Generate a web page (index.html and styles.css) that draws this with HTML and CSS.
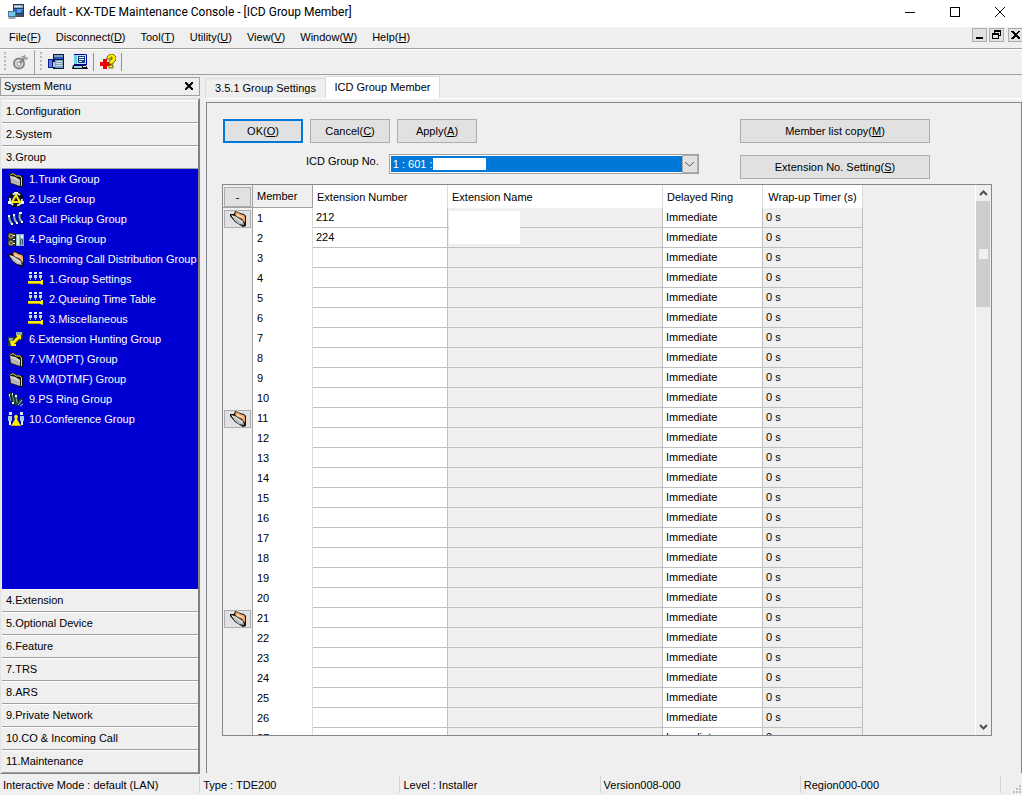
FILE: index.html
```html
<!doctype html>
<html lang="en">
    <head>
        <meta charset="UTF-8" />
        <meta name="viewport" content="width=device-width, initial-scale=1.0" />
        <title>default - KX-TDE Maintenance Console - [ICD Group Member]</title>
        <link rel="stylesheet" href="styles.css">
    </head>
    <body>
        <!-- shared icons -->
        <svg class="icon-defs" aria-hidden="true">
            <symbol id="i-console" viewBox="0 0 16 16">
                <path d="M5 0h11v13H5z" fill="#1c3a5e" />
                <path d="M6 1h9v3H6z" fill="#8fa6bc" />
                <path d="M6 2h7v1H6z" fill="#dfe9f2" />
                <path d="M6 5h9v4H6z" fill="#2a62c8" />
                <path d="M9 5h6l-3 4H9z" fill="#4f9be8" />
                <path d="M7 10h8v3H7z" fill="#3f5468" />
                <path d="M0 7h8v6H0z" fill="#4a7890" />
                <path d="M1 8h6v4H1z" fill="#6cc8ee" />
                <path d="M1 13h7l-1 2H0z" fill="#9aa6b0" />
            </symbol>
            <symbol id="i-connect" viewBox="0 0 16 16">
                <path d="M5 0h11v15H5z" fill="#001a4a" />
                <path d="M6 1h9v2H6z" fill="#8a9cb0" />
                <path d="M6 3h9v2H6z" fill="#1c5cc0" />
                <path d="M7 6h8v8H7z" fill="#7ba0b8" />
                <path d="M8 7.500h6M8 9.500h6M8 11.500h6" stroke="#cfe0ea" />
                <path d="M0 5h5v9H0z" fill="#0a1b8c" />
                <path d="M1 6h3v7H1z" fill="#5b7fd8" />
                <path d="M5 8h2v5H5z" fill="#c0c8d0" />
            </symbol>
            <symbol id="i-pc" viewBox="0 0 16 16">
                <path d="M2 0h12l1 1v10H2z" fill="#0000b0" />
                <path d="M2 1h3v9H2z" fill="#6cd0e8" />
                <path d="M5 1h9v9H5z" fill="#c4eef4" />
                <path d="M6 2h7v7H6z" fill="#123c8c" />
                <path d="M7 3.500h5M7 5.500h5M7 7.500h3" stroke="#fff" />
                <path d="M1 11h13l2 4H0z" fill="#0a1020" />
                <path d="M2 12h8v2H2z" fill="#8ad8e8" />
                <path d="M11 12h3v1h-3z" fill="#fff" />
            </symbol>
            <symbol id="i-plug" viewBox="0 0 16 16">
                <circle cx="7" cy="9.500" r="5" fill="#dcdcdc" stroke="#858585" stroke-width="2" />
                <circle cx="7" cy="10" r="2" fill="#f4f4f4" stroke="#999" />
                <path d="M8 9l5-6" stroke="#808080" stroke-width="2" />
                <path d="M9 2l2 1 2-2v3h3l-3 2" fill="#aaa" stroke="#999" />
            </symbol>
            <symbol id="i-help" viewBox="0 0 16 16">
                <path d="M3 5h4v3h4v4H7v3H3v-3H0V8h3z" fill="#f00000" />
                <path d="M7 5V3l3-3h3l3 3v3l-3 3v1H9V7l3-2V3h-1v2z" fill="#ffee00" stroke="#4a4400" stroke-width=".8" />
                <path d="M9 11h4v3H9z" fill="#ffee00" stroke="#4a4400" stroke-width=".8" />
            </symbol>
            <symbol id="i-folder" viewBox="0 0 16 16">
                <path d="M1 4l2-2h3l2 2h4l3 2v10h-3L1 12z" fill="#111" />
                <path d="M2 5l5 1 5 3v6L3 12z" fill="#b4b4b4" />
                <path d="M2 5l5 1 5 3v2L3 7z" fill="#d2d2ce" />
                <path d="M2 4.500L3.500 3H6l2 2h4l1.500 2v8" fill="none" stroke="#e6dc50" />
            </symbol>
            <symbol id="i-open" viewBox="0 0 16 16">
                <path d="M4 3l1-3 3 1 2 1 4 1 2 2v10l-3 1-8-5-5-6V3z" fill="#111" />
                <path d="M5 3l1-2 3 1 1 1 4 1 1 2v6l-3-4-6-3z" fill="#f6a868" />
                <path d="M7 3l6 3v1L7 5z" fill="#ffd9b0" />
                <path d="M1 4l4 1 5 3 3 2 1 4-5-1-4-3z" fill="#c0c0c0" />
                <path d="M2 5l6 3 4 3" fill="none" stroke="#ececec" />
            </symbol>
            <symbol id="i-user" viewBox="0 0 16 16">
                <circle cx="8" cy="8.500" r="6" fill="none" stroke="#000820" stroke-width="4" />
                <circle cx="8" cy="8.500" r="6" fill="none" stroke="#c4dce0" stroke-width="2" stroke-dasharray="8 4" />
                <path d="M8 4l4 7H4z" fill="#223" stroke="#ffe600" stroke-width="2" />
                <path d="M0 10h3v3H0zM13 10h3v3h-3zM6 1h4v1H6z" fill="#e8f4f4" />
            </symbol>
            <symbol id="i-pickup" viewBox="0 0 16 16">
                <path d="M1 5q0 6 4 9M6 4q0 6 4 9M13 2q-3 6 1 10" fill="none" stroke="#001030" stroke-width="3" />
                <path d="M1 5q0 5 3 8M6 4q0 5 3 8M12 2q-2 5 2 9" fill="none" stroke="#84acb8" stroke-width="2" />
                <path d="M0 4h2v2H0zM5 3h2v2H5zM11 1h3v2h-3zM3 12h2v2H3zM8 11h2v2H8zM13 10h2v2h-2z" fill="#fff" />
            </symbol>
            <symbol id="i-paging" viewBox="0 0 16 16">
                <path d="M0 2h7v13H0z" fill="#29303a" />
                <circle cx="3" cy="5" r="2" fill="#554" stroke="#c8b850" />
                <circle cx="3" cy="12" r="2" fill="#554" stroke="#c8b850" />
                <path d="M5 4.500h2M5 8.500h2M5 12.500h2" stroke="#fff" />
                <path d="M8 3h8v12H8z" fill="#8fb4bc" />
                <path d="M9 4h2v10H9zM13 4h2v3h-2z" fill="#e0f0f0" />
                <path d="M12 8h1v6h-1zM14 8h1v6h-1z" fill="#385868" />
            </symbol>
            <symbol id="i-settings" viewBox="0 0 16 16">
                <path d="M1 1h3v2H1zM6 1h3v2H6zM11 1h3v2h-3z" fill="#dcf0f4" />
                <path d="M1 4h3v3H1zM6 4h3v3H6zM11 4h3v3h-3z" fill="#c4dce4" />
                <path d="M2 7h1v2H2zM7 7h1v2H7zM12 7h1v2h-1z" fill="#8fb4c4" />
                <path d="M0 10h13V9h2v4H0z" fill="#ffee00" />
                <path d="M0 12h12v1H0zM13 13h2v1h-2z" fill="#b0a400" />
            </symbol>
            <symbol id="i-hunting" viewBox="0 0 16 16">
                <path d="M8 1h7v7H8zM0 6h7v9H0z" fill="#24384a" />
                <path d="M8 1h6v3H8zM1 7h4v3H1z" fill="#88a8b4" />
                <path d="M4 13l7-7" stroke="#3a3600" stroke-width="5" />
                <path d="M4 13l7-7" stroke="#ffee00" stroke-width="3" />
                <path d="M8 4h5v5zM2 10h3v3h3v2H3z" fill="#ffee00" />
            </symbol>
            <symbol id="i-psring" viewBox="0 0 16 16">
                <path d="M0 2l4-1 5 12-4 2z" fill="#102c24" />
                <path d="M6 4l3-1 2 11-4 1zM10 9l5-2-1 5-5 3z" fill="#1c3c30" />
                <path d="M1 4l2 6M4 3l2 8M8 6l1 6" stroke="#6fa48c" />
                <path d="M1 3h1v2H1zM4 2h1v2H4zM7 4h2v2H7zM4 11h2v2H4z" fill="#eef6f0" />
                <path d="M10 14l4-5M12 15l3-2" stroke="#b4ccc0" />
            </symbol>
            <symbol id="i-conference" viewBox="0 0 16 16">
                <path d="M1 1h3v3H1zM12 1h3v3h-3z" fill="#d0eef8" />
                <path d="M0 5h4v5H0zM12 5h4v5h-4z" fill="#a4ccdc" />
                <path d="M1 10h2v4H1zM13 10h2v4h-2z" fill="#f0fafc" />
                <path d="M7 4h2l1 2-1 2 4 7H3l4-7-1-2z" fill="#ffee00" />
                <path d="M3 14h10v1H3z" fill="#c8b800" />
            </symbol>
        </svg>

        <header class="title-bar">
            <svg class="icon"><use href="#i-console" /></svg>
            <h1>default - KX-TDE Maintenance Console - [ICD Group Member]</h1>
            <div class="window-buttons">
                <button aria-label="Minimize"><svg viewBox="0 0 10 10"><path d="M0 5.500h10" /></svg></button>
                <button aria-label="Maximize"><svg viewBox="0 0 10 10"><path d="M.5.5h9v9h-9z" /></svg></button>
                <button aria-label="Close"><svg viewBox="0 0 10 10" class="smooth"><path d="M0 0l10 10M10 0L0 10" /></svg></button>
            </div>
        </header>

        <nav class="menu-bar">
            <button>File(<u>F</u>)</button>
            <button>Disconnect(<u>D</u>)</button>
            <button>Tool(<u>T</u>)</button>
            <button>Utility(<u>U</u>)</button>
            <button>View(<u>V</u>)</button>
            <button>Window(<u>W</u>)</button>
            <button>Help(<u>H</u>)</button>
            <div class="child-buttons">
                <button aria-label="Minimize child"><svg viewBox="0 0 13 12"><path d="M3 8h7v2H3z" /></svg></button>
                <button aria-label="Restore child"><svg viewBox="0 0 13 12"><path d="M4 1h7v6H9V6h1V3H5v1H4zM2 4h7v6H2zM3 6v3h5V6z" fill-rule="evenodd" /></svg></button>
                <button aria-label="Close child"><svg viewBox="0 0 13 12"><path d="M2 2h2l2 2h1l2-2h2v1L8 5v1l3 3v1H9L7 8H6l-2 2H2V9l3-3V5L2 3z" /></svg></button>
            </div>
        </nav>

        <div class="toolbar">
            <span class="grip"></span>
            <button aria-label="Disconnect"><svg class="icon"><use href="#i-plug" /></svg></button>
            <span class="tool-end"></span>
            <span class="grip"></span>
            <button aria-label="Connect"><svg class="icon"><use href="#i-connect" /></svg></button>
            <button aria-label="PC settings"><svg class="icon"><use href="#i-pc" /></svg></button>
            <span class="tool-line"></span>
            <button aria-label="Help"><svg class="icon"><use href="#i-help" /></svg></button>
            <span class="tool-line"></span>
        </div>

        <div class="workspace">
            <aside class="sidebar">
                <div class="sidebar-head">
                    <h2>System Menu</h2>
                    <button aria-label="Close System Menu"><svg viewBox="0 0 8 8"><path d="M0 0l8 8M8 0L0 8" /></svg></button>
                </div>
                <div class="sections">
                    <button class="section">1.Configuration</button>
                    <button class="section">2.System</button>
                    <button class="section">3.Group</button>
                    <ul class="tree">
                        <li><a href="#"><svg class="icon"><use href="#i-folder" /></svg>1.Trunk Group</a></li>
                        <li><a href="#"><svg class="icon"><use href="#i-user" /></svg>2.User Group</a></li>
                        <li><a href="#"><svg class="icon"><use href="#i-pickup" /></svg>3.Call Pickup Group</a></li>
                        <li><a href="#"><svg class="icon"><use href="#i-paging" /></svg>4.Paging Group</a></li>
                        <li>
                            <a href="#"><svg class="icon"><use href="#i-open" /></svg>5.Incoming Call Distribution Group</a>
                            <ul>
                                <li><a href="#"><svg class="icon"><use href="#i-settings" /></svg>1.Group Settings</a></li>
                                <li><a href="#"><svg class="icon"><use href="#i-settings" /></svg>2.Queuing Time Table</a></li>
                                <li><a href="#"><svg class="icon"><use href="#i-settings" /></svg>3.Miscellaneous</a></li>
                            </ul>
                        </li>
                        <li><a href="#"><svg class="icon"><use href="#i-hunting" /></svg>6.Extension Hunting Group</a></li>
                        <li><a href="#"><svg class="icon"><use href="#i-folder" /></svg>7.VM(DPT) Group</a></li>
                        <li><a href="#"><svg class="icon"><use href="#i-folder" /></svg>8.VM(DTMF) Group</a></li>
                        <li><a href="#"><svg class="icon"><use href="#i-psring" /></svg>9.PS Ring Group</a></li>
                        <li><a href="#"><svg class="icon"><use href="#i-conference" /></svg>10.Conference Group</a></li>
                    </ul>
                    <button class="section">4.Extension</button>
                    <button class="section">5.Optional Device</button>
                    <button class="section">6.Feature</button>
                    <button class="section">7.TRS</button>
                    <button class="section">8.ARS</button>
                    <button class="section">9.Private Network</button>
                    <button class="section">10.CO &amp; Incoming Call</button>
                    <button class="section">11.Maintenance</button>
                </div>
            </aside>

            <main class="content">
                <div class="tabs" role="tablist">
                    <button class="tab" role="tab" aria-selected="false">3.5.1 Group Settings</button>
                    <button class="tab active" role="tab" aria-selected="true">ICD Group Member</button>
                </div>
                <section class="panel">
                    <div class="form-top">
                        <div class="form-left">
                            <div class="actions">
                                <button class="btn default">OK(<u>O</u>)</button>
                                <button class="btn">Cancel(<u>C</u>)</button>
                                <button class="btn">Apply(<u>A</u>)</button>
                            </div>
                            <div class="group-row">
                                <label for="group">ICD Group No.</label>
                                <div class="combo">
                                    <select id="group">
                                        <option>1 : 601 :</option>
                                    </select>
                                    <span class="combo-mask"></span>
                                    <span class="combo-arrow"><svg viewBox="0 0 9 5"><path d="M0 0l4.500 4L9 0" /></svg></span>
                                </div>
                            </div>
                        </div>
                        <div class="form-right">
                            <button class="btn">Member list copy(<u>M</u>)</button>
                            <button class="btn">Extension No. Setting(<u>S</u>)</button>
                        </div>
                    </div>

                    <div class="grid">
                        <div class="grid-view">
                            <table>
                                <colgroup>
                                    <col class="c-select" />
                                    <col class="c-member" />
                                    <col class="c-number" />
                                    <col class="c-name" />
                                    <col class="c-ring" />
                                    <col class="c-timer" />
                                </colgroup>
                                <thead>
                                    <tr>
                                        <th class="select"><button>-</button></th>
                                        <th class="member">Member</th>
                                        <th>Extension Number</th>
                                        <th>Extension Name</th>
                                        <th>Delayed Ring</th>
                                        <th class="timer">Wrap-up Timer (s)</th>
                                    </tr>
                                </thead>
                                <tbody id="members"></tbody>
                            </table>
                        </div>
                        <div class="scrollbar">
                            <button aria-label="Scroll up"><svg viewBox="0 0 9 6"><path d="M1 5l3.500-3.500L8 5" /></svg></button>
                            <div class="track"><div class="thumb"></div></div>
                            <button aria-label="Scroll down"><svg viewBox="0 0 9 6"><path d="M1 1l3.500 3.500L8 1" /></svg></button>
                        </div>
                    </div>
                </section>
            </main>
        </div>

        <footer class="status-bar">
            <span>Interactive Mode : default (LAN)</span>
            <span>Type : TDE200</span>
            <span>Level : Installer</span>
            <span>Version008-000</span>
            <span>Region000-000</span>
            <svg class="size-grip" viewBox="0 0 9 9"><path d="M6 0h2v2H6zM3 3h2v2H3zM6 3h2v2H6zM0 6h2v2H0zM3 6h2v2H3zM6 6h2v2H6z" /></svg>
        </footer>

        <script src="script.js"></script>
    </body>
</html>
```

FILE: styles.css
```css
* {
    box-sizing: border-box;
}
body {
    margin: 0;
    height: 100vh;
    display: flex;
    flex-direction: column;
    overflow: hidden;
    background: #efefef;
    color: #000;
    font: 11px/14px "Liberation Sans", Arial, sans-serif;
}
button,
select {
    font: inherit;
    color: inherit;
    margin: 0;
    padding: 0;
    border: 0;
    border-radius: 0;
    background: none;
}
h1,
h2 {
    margin: 0;
    font-size: inherit;
    font-weight: normal;
}
ul {
    margin: 0;
    padding: 0;
    list-style: none;
}
a {
    color: inherit;
    text-decoration: none;
}
svg {
    display: block;
    flex: none;
    shape-rendering: crispEdges;
}
.icon-defs {
    position: absolute;
    width: 0;
    height: 0;
}
.icon {
    width: 16px;
    height: 16px;
    shape-rendering: auto;
}

/* title bar */
.title-bar {
    display: flex;
    align-items: center;
    height: 27px;
    padding: 0 0 4px 8px;
    gap: 5px;
    background: #fff;
}
.title-bar h1 {
    font: 12px/16px Roboto, "Open Sans", sans-serif;
}
.window-buttons {
    display: flex;
    margin-left: auto;
}
.window-buttons button {
    display: grid;
    place-items: center;
    width: 45px;
    height: 22px;
}
.window-buttons svg {
    width: 10px;
    height: 10px;
    fill: none;
    stroke: #000;
}
.window-buttons .smooth {
    shape-rendering: auto;
}

/* menu bar */
.menu-bar {
    display: flex;
    gap: 15px;
    height: 22px;
    padding-left: 9px;
    border-bottom: 1px solid #a0a0a0;
}
.menu-bar > button {
    padding-bottom: 2px;
}
.child-buttons {
    display: flex;
    gap: 2px;
    margin: 1px -1px 0 auto;
}
.child-buttons button {
    width: 15px;
    height: 14px;
    border: 1px solid #adadad;
    background: #e1e1e1;
}
.child-buttons button:last-child {
    margin-left: 2px;
}
.child-buttons svg {
    width: 13px;
    height: 12px;
}

/* toolbar */
.toolbar {
    display: flex;
    align-items: center;
    height: 26px;
    padding-left: 4px;
    border-top: 1px solid #fff;
    border-bottom: 1px solid #a0a0a0;
}
.toolbar button {
    padding: 0 4px;
}
.grip {
    width: 2px;
    height: 20px;
    margin-right: 2px;
    background: repeating-linear-gradient(#b8b8b8 0 2px, transparent 2px 4px);
}
.tool-end {
    align-self: stretch;
    width: 1px;
    margin: 0 5px 0 2px;
    background: #a0a0a0;
}
.tool-line {
    width: 1px;
    height: 18px;
    margin: 0 2px 0 1px;
    background: #909090;
}

/* system menu */
.workspace {
    flex: 1;
    display: flex;
    min-height: 0;
}
.sidebar {
    flex: none;
    display: flex;
    flex-direction: column;
    width: 200px;
    padding-top: 2px;
}
.sidebar-head {
    display: flex;
    align-items: center;
    justify-content: space-between;
    height: 19px;
    padding: 0 6px 1px 3px;
    border: 1px solid #a0a0a0;
}
.sidebar-head svg {
    width: 8px;
    height: 8px;
    stroke: #000;
    stroke-width: 2;
    shape-rendering: auto;
}
.sections {
    flex: 1;
    display: flex;
    flex-direction: column;
    margin-top: 2px;
    border: 1px solid #808080;
    border-top: 2px solid #e3e3e3;
    border-left-color: #e3e3e3;
    border-right-width: 2px;
    padding-left: 1px;
}
.section {
    flex: none;
    height: 23px;
    padding: 0 4px 2px;
    text-align: left;
    border-top: 1px solid #fff;
    border-bottom: 1px solid #a0a0a0;
}
.tree {
    flex: 1;
    background: #0000d2;
    color: #fff;
}
.tree a {
    display: flex;
    align-items: center;
    gap: 5px;
    height: 20px;
    padding-left: 6px;
    white-space: nowrap;
}
.tree ul {
    padding-left: 20px;
}

/* tabs and panel */
.content {
    flex: 1;
    display: flex;
    flex-direction: column;
    min-width: 0;
    padding: 1px 0 1px 5px;
}
.tabs {
    display: flex;
    align-items: flex-end;
    border-bottom: 1px solid #fff;
}
.tab {
    width: 120px;
    height: 20px;
    padding-bottom: 2px;
    border: 1px solid #dcdcdc;
    border-right: 0;
    border-bottom: 0;
    white-space: nowrap;
}
.tab.active {
    width: 115px;
    height: 22px;
    border-right: 1px solid #dcdcdc;
    background: #fff;
}
.panel {
    flex: 1;
    display: flex;
    flex-direction: column;
    gap: 5px;
    min-height: 0;
    margin: 3px 0 0 1px;
    padding: 16px 29px 37px 15px;
    border: 1px solid #828790;
    border-bottom: 0;
}
.form-top {
    display: flex;
    justify-content: space-between;
    padding: 0 62px 0 1px;
}
.form-left {
    display: flex;
    flex-direction: column;
    gap: 11px;
}
.actions {
    display: flex;
    gap: 7px;
}
.btn {
    width: 80px;
    height: 24px;
    border: 1px solid #adadad;
    background: #e1e1e1;
}
.btn.default {
    border: 2px solid #0078d7;
}
.form-right {
    display: flex;
    flex-direction: column;
    gap: 12px;
}
.form-right .btn {
    width: 190px;
}
.group-row {
    display: flex;
    gap: 10px;
    padding-left: 83px;
}
.combo {
    position: relative;
    width: 310px;
    height: 20px;
    padding: 1px;
    border: 1px solid #a0a0a0;
    background: #fff;
}
.combo select {
    appearance: none;
    display: block;
    width: 100%;
    height: 16px;
    padding-left: 2px;
    line-height: 16px;
    background: #0078d7;
    color: #fff;
}
.combo-mask {
    position: absolute;
    left: 43px;
    top: 3px;
    width: 53px;
    height: 12px;
    background: #fff;
}
.combo-arrow {
    position: absolute;
    right: 0;
    top: 0;
    display: grid;
    place-items: center;
    width: 16px;
    height: 18px;
    border: 1px solid #adadad;
    background: #e1e1e1;
    pointer-events: none;
}
.combo-arrow svg {
    width: 9px;
    height: 5px;
    fill: none;
    stroke: #555;
    shape-rendering: auto;
}

/* member grid */
.grid {
    flex: 1;
    display: flex;
    min-height: 0;
    border: 1px solid #828790;
}
.grid-view {
    flex: 1;
    overflow: hidden;
}
table {
    width: 640px;
    table-layout: fixed;
    border-collapse: separate;
    border-spacing: 0;
}
.c-select {
    width: 30px;
}
.c-member {
    width: 60px;
}
.c-number {
    width: 135px;
}
.c-name {
    width: 215px;
}
.c-ring,
.c-timer {
    width: 100px;
}
th {
    height: 23px;
    padding: 0 4px;
    border-right: 1px solid #dcdcdc;
    background: #fff;
    font-weight: normal;
    text-align: left;
}
th.member {
    border-right-color: #a0a0a0;
    border-bottom: 1px solid #a0a0a0;
    background: #efefef;
}
th.timer {
    padding: 0;
    text-align: center;
}
td {
    position: relative;
    height: 20px;
    padding: 0 3px 2px;
    border-right: 1px solid #c0c0c0;
    border-bottom: 1px solid #c0c0c0;
    background: #fff;
}
td.member {
    padding: 0 4px;
    border-right-color: #dcdcdc;
    border-bottom: 0;
}
td.readonly {
    background: #efefef;
}
td.select,
th.select {
    padding: 1px 1px 0;
    border-right: 1px solid #a0a0a0;
    border-bottom: 0;
    background: #efefef;
}
th.select {
    border-bottom: 1px solid #a0a0a0;
}
.select button {
    display: grid;
    place-items: center;
    width: 27px;
    height: 18px;
    border: 1px solid #adadad;
    background: #e1e1e1;
}
th.select button {
    height: 20px;
}
.name-mask {
    position: absolute;
    z-index: 1;
    left: 1px;
    top: 3px;
    width: 71px;
    height: 33px;
    background: #fff;
}

/* scrollbar */
.scrollbar {
    flex: none;
    display: flex;
    flex-direction: column;
    width: 16px;
    border-left: 1px solid #fff;
}
.scrollbar button {
    display: grid;
    place-items: center;
    height: 16px;
}
.scrollbar svg {
    width: 9px;
    height: 6px;
    fill: none;
    stroke: #505050;
    stroke-width: 2;
    shape-rendering: auto;
}
.track {
    flex: 1;
}
.thumb {
    display: grid;
    place-items: center;
    height: 106px;
    margin-right: 1px;
    background: #cdcdcd;
}
.thumb::after {
    content: "";
    width: 9px;
    height: 10px;
    background: #f0f0f0;
}

/* status bar */
.status-bar {
    position: relative;
    flex: none;
    display: flex;
    height: 21px;
    padding: 2px 21px 2px 0;
}
.status-bar span {
    flex: 1;
    padding: 2px 3px 0;
    border-right: 1px solid #d4d4d4;
    white-space: nowrap;
}
.size-grip {
    position: absolute;
    right: 0;
    bottom: 1px;
    width: 9px;
    height: 9px;
    fill: #bfbfbf;
}
```

FILE: script.js
```js
const extensions = { 1: "212", 2: "224" };
const ROWS = 27;

const body = document.getElementById("members");

for (let i = 1; i <= ROWS; i++) {
    // a folder button opens every block of ten members
    const folder =
        i % 10 === 1
            ? `<button aria-label="Members from ${i}"><svg class="icon"><use href="#i-open" /></svg></button>`
            : "";
    const mask = i === 1 ? '<span class="name-mask"></span>' : "";

    const row = document.createElement("tr");
    row.innerHTML = `
        <td class="select">${folder}</td>
        <td class="member">${i}</td>
        <td>${extensions[i] || ""}</td>
        <td class="readonly">${mask}</td>
        <td>Immediate</td>
        <td class="readonly">0 s</td>`;
    body.appendChild(row);
}
```
